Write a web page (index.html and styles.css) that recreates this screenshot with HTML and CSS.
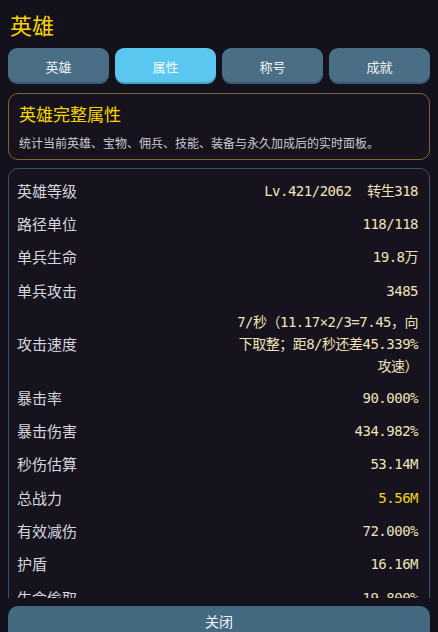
FILE: index.html
```html
<!DOCTYPE html>
<html lang="zh">
<head>
<meta charset="utf-8">
<link rel="stylesheet" href="styles.css">
</head>
<body>
<div class="page">
  <h1 class="title">英雄</h1>
  <div class="tabs">
    <div class="tab">英雄</div>
    <div class="tab active">属性</div>
    <div class="tab">称号</div>
    <div class="tab">成就</div>
  </div>
  <div class="info">
    <div class="info-title">英雄完整属性</div>
    <div class="info-desc">统计当前英雄、宝物、佣兵、技能、装备与永久加成后的实时面板。</div>
  </div>
  <div class="scroll">
    <div class="stats">
      <div class="row"><span class="label">英雄等级</span><span class="value">Lv.421/2062&nbsp;&nbsp;转生318</span></div>
      <div class="row"><span class="label">路径单位</span><span class="value">118/118</span></div>
      <div class="row"><span class="label">单兵生命</span><span class="value">19.8万</span></div>
      <div class="row"><span class="label">单兵攻击</span><span class="value">3485</span></div>
      <div class="row multi"><span class="label">攻击速度</span><span class="value">7/秒（11.17×2/3=7.45，向<br>下取整；距8/秒还差45.339%<br>攻速）</span></div>
      <div class="row"><span class="label">暴击率</span><span class="value">90.000%</span></div>
      <div class="row"><span class="label">暴击伤害</span><span class="value">434.982%</span></div>
      <div class="row"><span class="label">秒伤估算</span><span class="value">53.14M</span></div>
      <div class="row"><span class="label">总战力</span><span class="value gold">5.56M</span></div>
      <div class="row"><span class="label">有效减伤</span><span class="value">72.000%</span></div>
      <div class="row"><span class="label">护盾</span><span class="value">16.16M</span></div>
      <div class="row"><span class="label">生命偷取</span><span class="value">19.800%</span></div>
    </div>
  </div>
  <div class="close">关闭</div>
</div>
</body>
</html>
```
FILE: styles.css
```css
html, body {
  margin: 0;
  padding: 0;
  height: 632px;
  overflow: hidden;
  background: #13111c;
  font-family: "Noto Sans CJK SC", "Noto Sans", sans-serif;
}
.page {
  padding: 8px 8px 0 8px;
  display: flex;
  flex-direction: column;
}
.title {
  margin: 0 0 8px 2px;
  font-size: 22px;
  font-weight: normal;
  line-height: 32px;
  color: #f6d400;
}
.tabs {
  display: grid;
  grid-template-columns: repeat(4, 1fr);
  gap: 6px;
  margin-bottom: 9px;
}
.tab {
  height: 36px;
  border-radius: 9px;
  background: #4a6e85;
  color: #eef2f6;
  font-size: 13px;
  display: flex;
  align-items: center;
  justify-content: center;
  box-shadow: inset 0 -2px 0 rgba(0,0,0,0.18);
}
.tab.active {
  background: #5ac7f1;
  color: #f4fbff;
}
.info {
  border: 1px solid #7c6630;
  border-radius: 10px;
  background: #16131e;
  padding: 8px 10px 6px 10px;
  margin-bottom: 8px;
}
.info-title {
  font-size: 17px;
  line-height: 24px;
  color: #f6d400;
  margin-bottom: 7px;
}
.info-desc {
  font-size: 12px;
  line-height: 20px;
  color: #c9c9d2;
}
.scroll {
  height: 430px;
  overflow: hidden;
  margin-bottom: 8px;
}
.stats {
  border: 1px solid #38536c;
  border-radius: 10px;
  background: #16131f;
  padding: 5px 11px 10px 8px;
}
.row {
  display: flex;
  justify-content: space-between;
  align-items: center;
  min-height: 33.3px;
}
.row.multi {
  padding: 4px 0;
}
.label {
  font-size: 15px;
  line-height: 22px;
  color: #d5d5de;
}
.value {
  font-family: "DejaVu Sans Mono", "Noto Sans CJK SC", monospace;
  font-size: 14px;
  line-height: 22px;
  letter-spacing: -0.5px;
  color: #eee2b6;
  text-align: right;
}
.value.gold {
  color: #f2d21a;
}
.close {
  height: 36px;
  border-radius: 10px;
  background: #446a82;
  color: #f0f4f8;
  font-size: 14px;
  display: flex;
  align-items: center;
  justify-content: center;
  padding-bottom: 7px;
  box-sizing: border-box;
}
```
